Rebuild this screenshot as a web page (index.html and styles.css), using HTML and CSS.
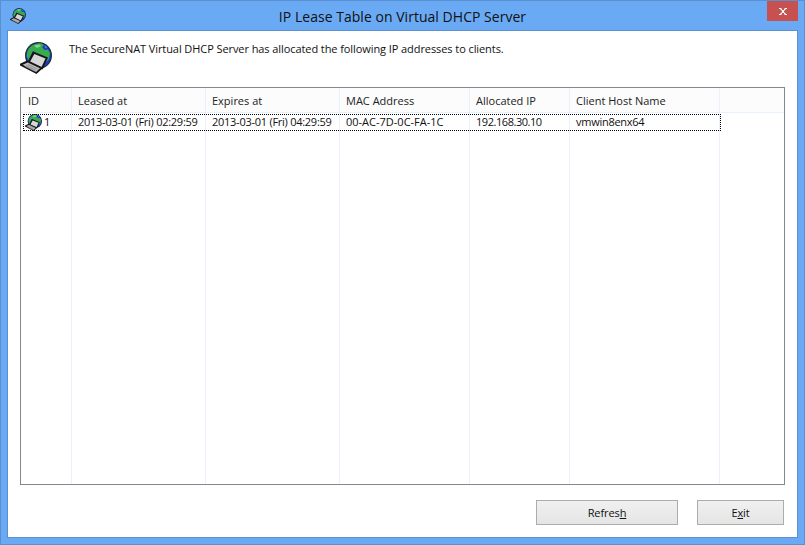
FILE: index.html
```html
<!DOCTYPE html>
<html lang="en">
<head>
<meta charset="utf-8">
<title>IP Lease Table on Virtual DHCP Server</title>
<link rel="stylesheet" href="styles.css">
</head>
<body>
<svg class="defs" width="0" height="0" aria-hidden="true">
  <symbol id="netpc" viewBox="0 0 32 32">
    <circle cx="18.500" cy="13.500" r="13.500" fill="#16302a"/>
    <circle cx="18.500" cy="13.500" r="12.300" fill="#2535d8"/>
    <path d="M7.500 9C10 3.500 15 1.300 21 1.300L24 3 22 5 24.500 8 28 7.500 30 11 29 17 26 20 23.500 14 18 12 13 9 8.500 18 6.500 14Z" fill="#38ac4a"/>
    <path d="M14 3.500L19 2.500 21 4 17 6Z" fill="#8fd09a"/>
    <path d="M24.500 2.700L27.500 5.500 25 6.200Z" fill="#2f8fc0"/>
    <path d="M13 9.500L28 15.500 22.500 27.500 7.500 20.500Z" fill="#161616"/>
    <path d="M14.300 12L25.500 16.500 21.500 25 10.200 19.600Z" fill="#d6d6d6"/>
    <path d="M7 18.500L23 26 16.500 32 0 23.500 0 21.800Z" fill="#161616"/>
    <path d="M7.800 20.500L20 26.200 16 30 2.600 22.800Z" fill="#bcbcbc"/>
    <path d="M8 22.500L17.500 27M6.200 23.500L15.800 28.200M4.800 24.200L14.500 29" stroke="#868686" stroke-width=".8" fill="none"/>
  </symbol>
</svg>
<div class="window">
  <header class="titlebar">
    <svg class="title-icon"><use href="#netpc"/></svg>
    <h1 class="title">IP Lease Table on Virtual DHCP Server</h1>
    <button class="close" aria-label="Close">
      <svg width="8" height="7" viewBox="0 0 8 7"><path d="M0 0H2.500V1H3V2H5V1H5.500V0H8V1H6.500V2H5.500V3H5V4H5.500V5H6.500V6H8V7H5.500V6H5V5H3V6H2.500V7H0V6H1.500V5H2.500V4H3V3H2.500V2H1.500V1H0Z" fill="#fff"/></svg>
    </button>
  </header>
  <main class="client">
    <section class="intro">
      <svg class="intro-icon"><use href="#netpc"/></svg>
      <p class="intro-text">The SecureNAT Virtual DHCP Server has allocated the following IP addresses to clients.</p>
    </section>
    <section class="list">
      <div class="row head">
        <div class="cell first">ID</div>
        <div class="cell">Leased at</div>
        <div class="cell">Expires at</div>
        <div class="cell">MAC Address</div>
        <div class="cell">Allocated IP</div>
        <div class="cell">Client Host Name</div>
        <div class="cell"></div>
      </div>
      <div class="row item">
        <div class="cell id"><svg class="row-icon"><use href="#netpc"/></svg>1</div>
        <div class="cell date">2013-03-01 (Fri) 02:29:59</div>
        <div class="cell date">2013-03-01 (Fri) 04:29:59</div>
        <div class="cell">00-AC-7D-0C-FA-1C</div>
        <div class="cell ip">192.168.30.10</div>
        <div class="cell host">vmwin8enx64</div>
        <div class="cell"></div>
      </div>
      <div class="row filler">
        <div class="cell"></div><div class="cell"></div><div class="cell"></div><div class="cell"></div><div class="cell"></div><div class="cell"></div><div class="cell"></div>
      </div>
    </section>
    <footer class="actions">
      <button class="btn wide">Refres<u>h</u></button>
      <button class="btn">E<u>x</u>it</button>
    </footer>
  </main>
</div>
</body>
</html>
```

FILE: styles.css
```css
* { box-sizing: border-box; }
html, body { margin: 0; height: 100%; }
body { font-family: "Open Sans", "Noto Sans", "Liberation Sans", sans-serif; font-size: 11px; color: #111; overflow: hidden; }
.defs { position: absolute; }
.window { width: 805px; height: 545px; background: #6aaaf5; border: 1px solid #5a8fd0; display: flex; flex-direction: column; padding: 0 6px 6px 6px; }
.titlebar { height: 29px; flex: none; display: flex; align-items: flex-start; position: relative; margin: 0 -6px; padding: 7px 0 0 9px; }
.title-icon { width: 16px; height: 16px; }
.title { position: absolute; left: 0; right: 0; top: 6px; margin: 0; text-align: center; font-size: 14px; letter-spacing: .03px; line-height: 20px; font-weight: 400; color: #111; }
.close { position: absolute; right: 6px; top: 0; width: 31px; height: 20px; background: #c75050; border: 0; padding: 0; display: flex; align-items: center; justify-content: center; }
.client { flex: 1; background: #fff; border: 1px solid #5a8fd0; display: flex; flex-direction: column; padding: 0 12px 12px 12px; min-height: 0; }
.intro { height: 56px; flex: none; display: flex; align-items: flex-start; }
.intro-icon { width: 32px; height: 32px; margin-top: 11px; flex: none; }
.intro-text { margin: 10px 0 0 17px; line-height: 15px; letter-spacing: -.08px; }
.list { flex: 1; min-height: 0; border: 1px solid #828790; display: flex; flex-direction: column; }
.row { display: grid; grid-template-columns: 51px 134px 134px 130px 100px 150px 1fr; }
.cell { border-right: 1px solid #ebf1fa; padding-left: 6px; white-space: nowrap; }
.cell:last-child { border-right: 0; }
.head { height: 25px; background: #fcfcfc; border-bottom: 1px solid #e8f0fb; line-height: 25px; }
.head .cell { color: #222; }
.head .first { padding-left: 7px; }
.item { height: 18px; line-height: 18px; position: relative; }
.item::after { content: ""; position: absolute; left: 2px; top: 1px; width: 696px; height: 15px; border: 1px dotted #000; }
.date { letter-spacing: -.26px; }
.ip { letter-spacing: -.45px; }
.host { letter-spacing: -.27px; }
.id { display: flex; align-items: center; padding-left: 4px; }
.row-icon { width: 17px; height: 17px; flex: none; margin-right: 2px; }
.filler { flex: 1; }
.actions { flex: none; height: 40px; display: flex; justify-content: flex-end; align-items: flex-end; gap: 19px; padding-right: 1px; }
.btn { width: 87px; height: 25px; font: inherit; letter-spacing: -.1px; color: #111; background: linear-gradient(#f0f0f0, #e5e5e5); border: 1px solid #acacac; padding: 0; }
.wide { width: 142px; }
```
